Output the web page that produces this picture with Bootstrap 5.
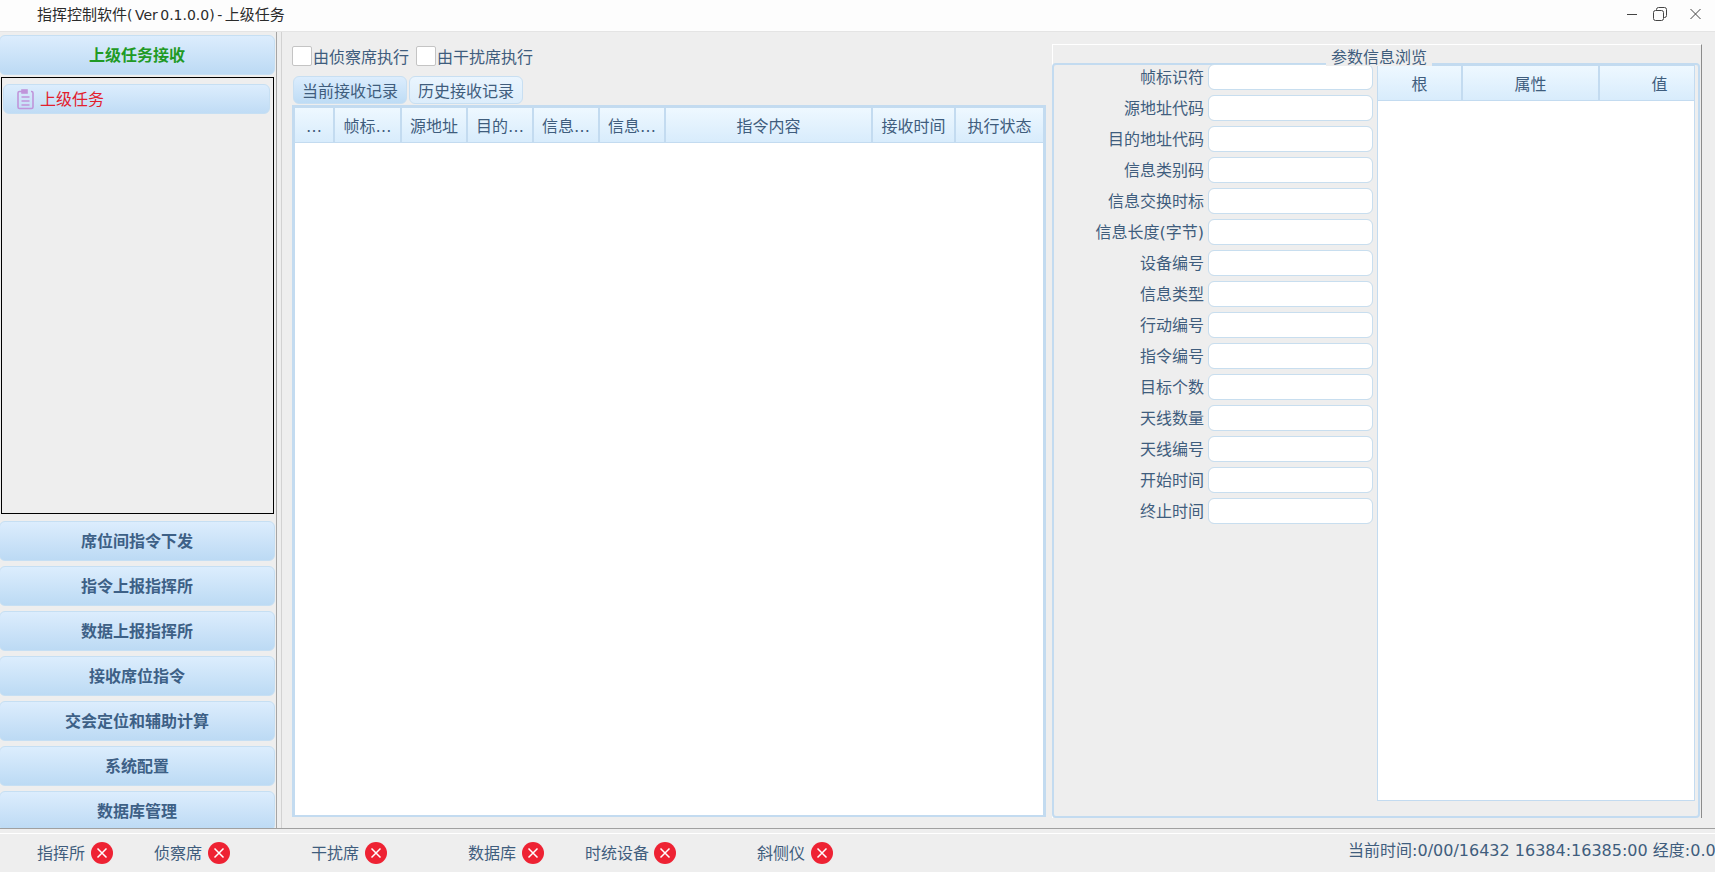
<!DOCTYPE html>
<html lang="zh-CN">
<head>
  <meta charset="UTF-8" />
  <meta name="viewport" content="width=device-width, initial-scale=1.0" />
  <title>指挥控制软件</title>
  <link href="https://cdn.jsdelivr.net/npm/bootstrap@5.3.0/dist/css/bootstrap.min.css" rel="stylesheet">
  <style>
    html, body {
      height: 100%;
      overflow: hidden;
    }

    body {
      font-family: "DejaVu Sans", "Noto Sans CJK SC", sans-serif;
      font-size: 16px;
      line-height: 1.2;
      background-color: #eeeeee;
      color: #3f5d7d;
    }

    .title-strip {
      height: 32px;
      padding-left: 37px;
      background-color: #fdfdfd;
      color: #2b2b2b;
      font-size: 15px;
      border-bottom: 1px solid #e4e4e4;
    }

    .title-text {
      padding-bottom: 2px;
    }

    .title-ver {
      font-size: 14px;
      word-spacing: -2px;
    }

    .win-btns {
      margin-left: auto;
      padding-right: 13px;
      padding-bottom: 3px;
      gap: 15px;
    }

    .win-close {
      margin-left: 7px;
    }

    .work-row {
      height: 797px;
      border-bottom: 1px solid #a0a0a0;
    }

    .side-col {
      width: 277px;
      padding-top: 3px;
      border-right: 1px solid #a5a5a5;
      overflow: hidden;
      flex: none;
      gap: 5px;
    }

    .nav-bar-btn {
      flex: none;
      width: 276px;
      height: 40px;
      margin-left: -1px;
      padding: 2px 0 0;
      font-size: 16px;
      font-weight: 700;
      color: #3d6086;
      border: 1px solid #c6dff3;
      border-radius: 6px;
      background: linear-gradient(#dcedfd, #bcdaf4);
    }

    .nav-bar-btn.is-open {
      color: #1f9a25;
    }

    .task-box {
      flex: none;
      height: 437px;
      width: 273px;
      margin: -3px 0 2px 1px;
      padding: 6px 1px;
      border: 1px solid #000;
    }

    .task-item {
      height: 30px;
      width: 267px;
      padding-left: 13px;
      gap: 6px;
      color: #e2202e;
      border: 1px solid #c6dff3;
      border-radius: 6px;
      background: linear-gradient(#dcedfd, #c0dcf5);
    }

    .task-item span {
      padding-top: 2px;
    }

    .content-col {
      margin-left: 4px;
      padding: 12px 0 11px 11px;
      border-left: 1px solid #d2d2d2;
      gap: 6px;
      min-width: 0;
    }

    .left-pane {
      width: 753px;
      flex: none;
    }

    .check-row {
      height: 20px;
      margin: 2px 0 10px -1px;
    }

    .check-row .form-check-input {
      width: 20px;
      height: 20px;
      margin: 0 1px 0 0;
      border: 1px solid #c4c4c4;
      border-radius: 2px;
    }

    .check-row label {
      margin-right: 7px;
      padding-top: 3px;
    }

    .tab-row {
      column-gap: 2px;
    }

    .rec-tab {
      width: 114px;
      height: 28px;
      padding: 3px 0 0;
      font-size: 16px;
      color: #3f5d7d;
      border: 1px solid #c8dff2;
      border-radius: 6px;
      background: linear-gradient(#eaf5fe, #dcedfb);
    }

    .rec-tab.is-current {
      background: linear-gradient(#dcedfd, #bedcf5);
    }

    .grid-frame {
      flex: 1;
      min-height: 0;
      margin: 1px 0 0 -1px;
      width: 754px;
      background-color: #fff;
      border: 3px solid #c3dbf0;
      border-bottom-width: 2px;
    }

    .grid-table {
      table-layout: fixed;
      margin: 0;
      border-collapse: separate;
      border-spacing: 0;
      width: auto;
    }

    .grid-table th {
      height: 35px;
      padding: 3px 2px 0;
      text-align: center;
      vertical-align: middle;
      font-weight: 400;
      white-space: nowrap;
      color: #3f5d7d;
      background: linear-gradient(#eef8ff, #d8ecfc);
      border: 0;
      border-right: 2px solid #c3dbf0;
      border-bottom: 1px solid #c3dbf0;
      box-shadow: none;
    }

    .grid-table th:last-child {
      border-right: 0;
    }

    .grid-table .col-narrow { width: 40px; }
    .grid-table .col-first { width: 67px; }
    .grid-table .col-mid { width: 66px; }
    .grid-table .col-body { width: 207px; }
    .grid-table .col-time { width: 83px; }
    .grid-table .col-state { width: 87px; }
    .grid-table .col-root { width: 85px; }
    .grid-table .col-attr { width: 137px; }
    .grid-table .col-val { width: 94px; }

    .grid-table th.val-head {
      padding-left: 27px;
    }

    .param-pane {
      width: 650px;
      flex: none;
      position: relative;
      height: 774px;
      padding-top: 18px;
      border-top: 1px solid #fff;
      border-left: 1px solid #fff;
      border-right: 1px solid #8c8c8c;
    }

    .param-legend {
      position: absolute;
      top: 3px;
      left: 273px;
      width: 106px;
      height: 18px;
      text-align: center;
      background-color: #eeeeee;
      z-index: 1;
    }

    .param-frame {
      height: 755px;
      width: 648px;
      margin-left: -1px;
      border: 2px solid #c3dbf0;
      border-radius: 4px;
      padding-right: 3px;
    }

    .param-form {
      width: 321px;
      margin-top: -1px;
      flex: none;
      gap: 5px;
    }

    .param-line {
      height: 26px;
      gap: 4px;
    }

    .param-line label {
      width: 150px;
      padding-top: 2px;
      text-align: right;
      flex: none;
    }

    .param-line .form-control {
      width: 165px;
      height: 26px;
      padding: 0 4px;
      min-height: 0;
      border: 1px solid #c8deef;
      border-radius: 6px;
    }

    .tree-frame {
      width: 318px;
      height: 736px;
      margin-left: 2px;
      background-color: #fff;
      border: 1px solid #c3dbf0;
    }

    .status-strip {
      height: 39px;
      padding-left: 37px;
      border-top: 1px solid #fff;
      margin-top: 4px;
      overflow: hidden;
      white-space: nowrap;
    }

    .lamp-item {
      gap: 6px;
      margin-right: 41px;
      flex: none;
    }

    .lamp-item:nth-child(5) {
      gap: 5px;
    }

    .lamp-item span {
      padding-top: 2px;
    }

    .lamp-item.wide-gap {
      margin-right: 81px;
    }

    .clock-text {
      margin-left: 474px;
      margin-top: -4px;
    }
  </style>
</head>
<body class="d-flex flex-column">

  <header class="title-strip d-flex align-items-center">
    <span class="title-text">指挥控制软件<span class="title-ver">( Ver 0.1.0.0) - </span>上级任务</span>
    <div class="win-btns d-flex align-items-center">
      <svg width="12" height="14" viewBox="0 0 12 14" fill="none" stroke="#444" stroke-width="1"><path d="M1 7.5h10"/></svg>
      <svg width="14" height="14" viewBox="0 0 14 14" fill="none" stroke="#444" stroke-width="1"><rect x="0.5" y="3.5" width="10" height="10" rx="2"/><path d="M3.5 3.5v-1a2 2 0 0 1 2-2h6a2 2 0 0 1 2 2v6a2 2 0 0 1-2 2h-1"/></svg>
      <svg class="win-close" width="13" height="14" viewBox="0 0 13 14" fill="none" stroke="#444" stroke-width="1"><path d="M1.5 2l10 10M11.5 2l-10 10"/></svg>
    </div>
  </header>

  <div class="work-row d-flex">
    <aside class="side-col d-flex flex-column">
      <button type="button" class="btn nav-bar-btn is-open">上级任务接收</button>
      <div class="task-box">
        <div class="task-item d-flex align-items-center">
          <svg width="17" height="21" viewBox="0 0 17 21" fill="none" stroke="#c095da" stroke-width="1.6">
            <path d="M5 2.500H2.500a1.500 1.500 0 0 0-1.500 1.500v14a1.500 1.500 0 0 0 1.500 1.500h12a1.500 1.500 0 0 0 1.500-1.500v-14a1.500 1.500 0 0 0-1.500-1.500H14"/>
            <rect x="5" y="1" width="5" height="3" fill="#c095da"/>
            <path d="M4.500 8h8M4.500 12h8M4.500 16h8"/>
          </svg>
          <span>上级任务</span>
        </div>
      </div>
      <button type="button" class="btn nav-bar-btn">席位间指令下发</button>
      <button type="button" class="btn nav-bar-btn">指令上报指挥所</button>
      <button type="button" class="btn nav-bar-btn">数据上报指挥所</button>
      <button type="button" class="btn nav-bar-btn">接收席位指令</button>
      <button type="button" class="btn nav-bar-btn">交会定位和辅助计算</button>
      <button type="button" class="btn nav-bar-btn">系统配置</button>
      <button type="button" class="btn nav-bar-btn">数据库管理</button>
    </aside>

    <main class="content-col d-flex flex-grow-1">
      <section class="left-pane d-flex flex-column">
        <div class="check-row d-flex align-items-center">
          <input class="form-check-input" type="checkbox" id="chkScout">
          <label for="chkScout">由侦察席执行</label>
          <input class="form-check-input" type="checkbox" id="chkJam">
          <label for="chkJam">由干扰席执行</label>
        </div>
        <div class="tab-row d-flex">
          <button type="button" class="btn rec-tab is-current">当前接收记录</button>
          <button type="button" class="btn rec-tab">历史接收记录</button>
        </div>
        <div class="grid-frame">
          <table class="table grid-table">
            <colgroup>
              <col class="col-narrow"><col class="col-first"><col class="col-mid"><col class="col-mid"><col class="col-mid"><col class="col-mid"><col class="col-body"><col class="col-time"><col class="col-state">
            </colgroup>
            <thead>
              <tr><th>…</th><th>帧标…</th><th>源地址</th><th>目的…</th><th>信息…</th><th>信息…</th><th>指令内容</th><th>接收时间</th><th>执行状态</th></tr>
            </thead>
          </table>
        </div>
      </section>

      <section class="param-pane">
        <div class="param-legend">参数信息浏览</div>
        <div class="param-frame d-flex">
          <form class="param-form d-flex flex-column" id="paramForm"></form>
          <div class="tree-frame">
            <table class="table grid-table">
              <colgroup><col class="col-root"><col class="col-attr"><col class="col-val"></colgroup>
              <thead><tr><th>根</th><th>属性</th><th class="val-head">值</th></tr></thead>
            </table>
          </div>
        </div>
      </section>
    </main>
  </div>

  <footer class="status-strip d-flex align-items-center" id="statusBar"></footer>

  <script src="https://cdn.jsdelivr.net/npm/bootstrap@5.3.0/dist/js/bootstrap.bundle.min.js"></script>
  <script>
    const paramNames = ['帧标识符', '源地址代码', '目的地址代码', '信息类别码', '信息交换时标', '信息长度(字节)', '设备编号', '信息类型', '行动编号', '指令编号', '目标个数', '天线数量', '天线编号', '开始时间', '终止时间'];
    document.getElementById('paramForm').innerHTML = paramNames.map(name => `
      <div class="param-line d-flex align-items-center">
        <label>${name}</label>
        <input type="text" class="form-control">
      </div>`).join('');

    const lamps = [['指挥所', 0], ['侦察席', 1], ['干扰席', 1], ['数据库', 0], ['时统设备', 1], ['斜侧仪', 0]];
    const lampIcon = '<svg width="22" height="22" viewBox="0 0 22 22"><circle cx="11" cy="11" r="11" fill="#ee2233"/><path d="M6.500 6.500l9 9M15.500 6.500l-9 9" stroke="#fff" stroke-width="1.500"/></svg>';
    document.getElementById('statusBar').innerHTML = lamps.map(([name, wide]) => `
      <div class="lamp-item d-flex align-items-center${wide ? ' wide-gap' : ''}"><span>${name}</span>${lampIcon}</div>`).join('')
      + '<div class="clock-text">当前时间:0/00/16432 16384:16385:00 经度:0.0</div>';
  </script>
</body>
</html>
